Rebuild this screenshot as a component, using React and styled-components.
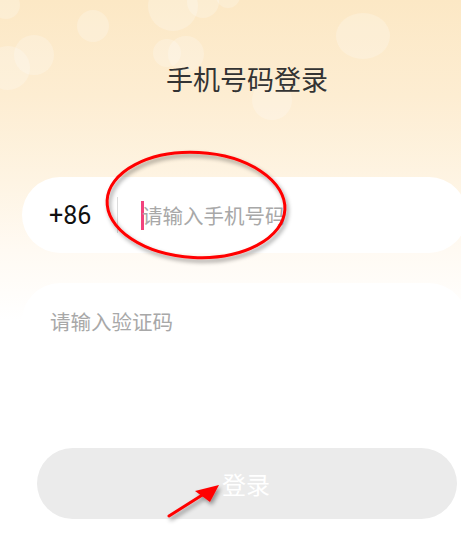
import React, { useState } from "react";
import styled, { createGlobalStyle } from "styled-components";

// 페이지 기본 스타일
const GlobalStyle = createGlobalStyle`
  html, body {
    margin: 0;
    padding: 0;
    background: #ffffff;
  }
  body {
    font-family: "Noto Sans CJK SC", "Noto Sans", Roboto, sans-serif;
  }
  * {
    box-sizing: border-box;
  }
`;

const Page = styled.div`
  position: relative;
  width: 461px;
  height: 534px;
  overflow: hidden;
  background: linear-gradient(
    180deg,
    #fce8c5 0%,
    #fdedd2 18%,
    #fef4e3 34%,
    #fffaf3 47%,
    #ffffff 60%
  );
`;

const Bokeh = styled.svg`
  position: absolute;
  left: 0;
  top: 0;
  pointer-events: none;
`;

const Content = styled.div`
  position: relative;
  display: flex;
  flex-direction: column;
`;

const Title = styled.h1`
  margin: 0;
  padding-top: 60px;
  padding-left: 33px;
  height: 177px;
  text-align: center;
  font-size: 27px;
  line-height: 38px;
  font-weight: 400;
  color: #333333;
`;

const Field = styled.div`
  display: flex;
  align-items: center;
  height: 76px;
  margin-left: 22px;
  margin-right: -6px;
  padding-left: ${(props) => props.inset || "27px"};
  background: #ffffff;
  border-radius: 38px;
  margin-bottom: ${(props) => props.gap || "0"};
`;

const Prefix = styled.span`
  font-family: Roboto, "Noto Sans", sans-serif;
  font-size: 25px;
  color: #111111;
  width: 68px;
`;

const Divider = styled.span`
  width: 1px;
  height: 36px;
  background: #dcdcdc;
  margin-right: 23px;
`;

const Input = styled.input`
  flex: 1;
  border: none;
  outline: none;
  background: transparent;
  padding: 0;
  font-family: "Noto Sans CJK SC", sans-serif;
  font-size: 20.5px;
  color: #333333;
  caret-color: #f2437e;

  &::placeholder {
    color: #a8a8a8;
  }
`;

const Caret = styled.span`
  width: 3px;
  height: 29px;
  background: #f2437e;
  margin-right: -2px;
`;

const LoginButton = styled.button`
  margin: 89px 4px 0 37px;
  height: 71px;
  border: none;
  border-radius: 36px;
  background: #ebebeb;
  color: #ffffff;
  font-family: "Noto Sans CJK SC", sans-serif;
  font-size: 24px;
  padding-right: 8px;
  cursor: pointer;
`;

const Annotation = styled.svg`
  position: absolute;
  left: 0;
  top: 0;
  pointer-events: none;
`;

// 배경 보케 원
const bubbles = [
  { cx: 173, cy: 6, r: 25 },
  { cx: 203, cy: 2, r: 16 },
  { cx: 228, cy: -4, r: 12 },
  { cx: 363, cy: 36, rx: 27, ry: 23 },
  { cx: 93, cy: 26, r: 16 },
  { cx: 34, cy: 55, r: 20 },
  { cx: 6, cy: 5, r: 14 },
  { cx: 186, cy: 54, r: 18 },
  { cx: 167, cy: 53, r: 14 },
  { cx: 272, cy: 100, r: 20 },
  { cx: 8, cy: 68, r: 22 },
];

export default function App() {
  const [phone, setPhone] = useState("");
  const [code, setCode] = useState("");

  return (
    <Page>
      <GlobalStyle />
      <Bokeh width="461" height="180">
        {bubbles.map((b, i) => (
          <ellipse
            key={i}
            cx={b.cx}
            cy={b.cy}
            rx={b.rx || b.r}
            ry={b.ry || b.r}
            fill="#ffffff"
            opacity="0.22"
          />
        ))}
      </Bokeh>

      <Content>
        <Title>手机号码登录</Title>

        <Field gap="30px">
          <Prefix>+86</Prefix>
          <Divider />
          <Caret />
          <Input
            value={phone}
            onChange={(e) => setPhone(e.target.value)}
            placeholder="请输入手机号码"
          />
        </Field>

        <Field inset="28px">
          <Input
            value={code}
            onChange={(e) => setCode(e.target.value)}
            placeholder="请输入验证码"
          />
        </Field>

        <LoginButton>登录</LoginButton>
      </Content>

      {/* 빨간 표시 */}
      <Annotation width="461" height="534">
        <defs>
          <filter id="shadow" x="-20%" y="-20%" width="140%" height="140%">
            <feDropShadow dx="2" dy="3" stdDeviation="2" floodColor="#000" floodOpacity="0.4" />
          </filter>
        </defs>
        <g filter="url(#shadow)">
          <ellipse
            cx="196"
            cy="205"
            rx="89"
            ry="52.5"
            transform="rotate(3 196 205)"
            fill="none"
            stroke="#ff0000"
            strokeWidth="3"
          />
          <line x1="169" y1="516" x2="207" y2="492" stroke="#ff0000" strokeWidth="3" strokeLinecap="round" />
          <polygon points="219,485 195,491 210,502" fill="#ff0000" />
        </g>
      </Annotation>
    </Page>
  );
}
